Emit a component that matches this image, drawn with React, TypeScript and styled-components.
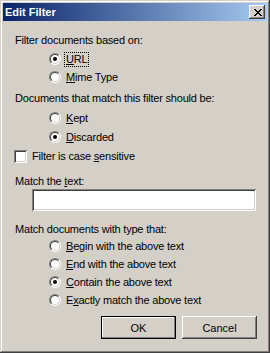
import styled, { createGlobalStyle } from "styled-components";

const GlobalStyle = createGlobalStyle`
  html, body {
    margin: 0;
    padding: 0;
    background: #D4D0C8;
  }
  body {
    font-family: "Liberation Sans", Arial, sans-serif;
    font-size: 11px;
    color: #000000;
  }
`;

// pixel pattern of the classic close glyph
const closeGlyph = [0, 1, 2, 3, 4, 5, 6].flatMap((r) => [
  { x: r, y: r },
  { x: 6 - r, y: r },
]);

export default function App() {
  return (
    <>
      <GlobalStyle />
      <Window>
        <TitleBar>
          <Title>Edit Filter</Title>
          <CloseButton>
            <svg width="8" height="7" viewBox="0 0 8 7" shapeRendering="crispEdges">
              {closeGlyph.map((p, i) => (
                <rect key={i} x={p.x} y={p.y} width="2" height="1" fill="#000" />
              ))}
            </svg>
          </CloseButton>
        </TitleBar>

        <Content>
          <Label $top={0}>Filter documents based on:</Label>
          <Radio $top={2} checked focused>
            <u>U</u>RL
          </Radio>
          <Radio $top={0}>
            <u>M</u>ime Type
          </Radio>

          <Label $top={4}>Documents that match this filter should be:</Label>
          <Radio $top={3}>
            <u>K</u>ept
          </Radio>
          <Radio $top={1} checked>
            <u>D</u>iscarded
          </Radio>

          <CheckRow>
            <CheckBox />
            <span>
              Filter is case <u>s</u>ensitive
            </span>
          </CheckRow>

          <Label $top={8}>
            Match the <u>t</u>ext:
          </Label>
          <TextField type="text" />

          <Label $top={10}>Match documents with type that:</Label>
          <Radio $top={0}>
            <u>B</u>egin with the above text
          </Radio>
          <Radio $top={0}>
            <u>E</u>nd with the above text
          </Radio>
          <Radio $top={0} checked>
            <u>C</u>ontain the above text
          </Radio>
          <Radio $top={0}>
            E<u>x</u>actly match the above text
          </Radio>

          <ButtonRow>
            <PushButton $default>OK</PushButton>
            <PushButton>Cancel</PushButton>
          </ButtonRow>
        </Content>
      </Window>
    </>
  );
}

function Radio({
  $top,
  checked,
  focused,
  children,
}: {
  $top: number;
  checked?: boolean;
  focused?: boolean;
  children: React.ReactNode;
}) {
  return (
    <RadioRow $top={$top}>
      <RadioOuter>
        <RadioInner>{checked && <Dot />}</RadioInner>
      </RadioOuter>
      <RadioText $focused={focused}>{children}</RadioText>
    </RadioRow>
  );
}

const Window = styled.div`
  width: 270px;
  height: 353px;
  box-sizing: border-box;
  padding: 3px;
  background: #d4d0c8;
  box-shadow: inset -1px -1px #404040, inset 1px 1px #d4d0c8,
    inset -2px -2px #808080, inset 2px 2px #ffffff;
  display: flex;
  flex-direction: column;
`;

const TitleBar = styled.div`
  height: 18px;
  flex: none;
  display: flex;
  align-items: center;
  justify-content: space-between;
  padding: 0 2px 0 2px;
  background: linear-gradient(90deg, #0a246a, #a6caf0);
`;

const Title = styled.span`
  color: #ffffff;
  font-weight: 700;
  font-size: 11px;
`;

const CloseButton = styled.div`
  width: 16px;
  height: 14px;
  box-sizing: border-box;
  background: #d4d0c8;
  box-shadow: inset -1px -1px #404040, inset 1px 1px #ffffff,
    inset -2px -2px #808080;
  display: flex;
  align-items: center;
  justify-content: center;
  padding-left: 1px;
`;

const Content = styled.div`
  padding: 11px 10px 0 12px;
  display: flex;
  flex-direction: column;
  letter-spacing: -0.2px;
`;

const Label = styled.div<{ $top: number }>`
  height: 16px;
  line-height: 16px;
  margin-top: ${(p) => p.$top}px;
  white-space: nowrap;
`;

const RadioRow = styled.div<{ $top: number }>`
  height: 18px;
  margin-top: ${(p) => p.$top}px;
  padding-left: 34px;
  display: flex;
  align-items: center;
  gap: 4px;
  white-space: nowrap;
`;

const RadioOuter = styled.span`
  width: 12px;
  height: 12px;
  flex: none;
  box-sizing: border-box;
  border-radius: 50%;
  border: 1px solid;
  border-color: #808080 #ffffff #ffffff #808080;
  display: flex;
`;

const RadioInner = styled.span`
  flex: 1;
  border-radius: 50%;
  border: 1px solid;
  border-color: #404040 #d4d0c8 #d4d0c8 #404040;
  background: #ffffff;
  display: flex;
  align-items: center;
  justify-content: center;
`;

const Dot = styled.span`
  width: 4px;
  height: 4px;
  border-radius: 50%;
  background: #000000;
`;

const RadioText = styled.span<{ $focused?: boolean }>`
  padding: 0 1px;
  line-height: 13px;
  outline: ${(p) => (p.$focused ? "1px dotted #000" : "none")};
`;

const CheckRow = styled.div`
  height: 18px;
  margin-top: 1px;
  margin-left: -1px;
  display: flex;
  align-items: center;
  gap: 5px;
  white-space: nowrap;
`;

const CheckBox = styled.span`
  width: 13px;
  height: 13px;
  flex: none;
  background: #ffffff;
  box-shadow: inset 1px 1px #808080, inset -1px -1px #ffffff,
    inset 2px 2px #404040, inset -2px -2px #d4d0c8;
`;

const TextField = styled.input`
  width: 224px;
  height: 22px;
  box-sizing: border-box;
  margin: 0 0 0 17px;
  border: none;
  outline: none;
  background: #ffffff;
  box-shadow: inset 1px 1px #808080, inset -1px -1px #ffffff,
    inset 2px 2px #404040, inset -2px -2px #d4d0c8;
`;

const ButtonRow = styled.div`
  margin-top: 7px;
  display: flex;
  justify-content: flex-end;
  gap: 6px;
`;

const PushButton = styled.button<{ $default?: boolean }>`
  width: 75px;
  height: 23px;
  box-sizing: border-box;
  padding: 0;
  font-family: "Liberation Sans", Arial, sans-serif;
  font-size: 11px;
  color: #000000;
  background: #d4d0c8;
  border: ${(p) => (p.$default ? "1px solid #000" : "none")};
  box-shadow: ${(p) =>
    p.$default
      ? "inset -1px -1px #808080, inset 1px 1px #ffffff"
      : "inset -1px -1px #404040, inset 1px 1px #ffffff, inset -2px -2px #808080"};
`;
